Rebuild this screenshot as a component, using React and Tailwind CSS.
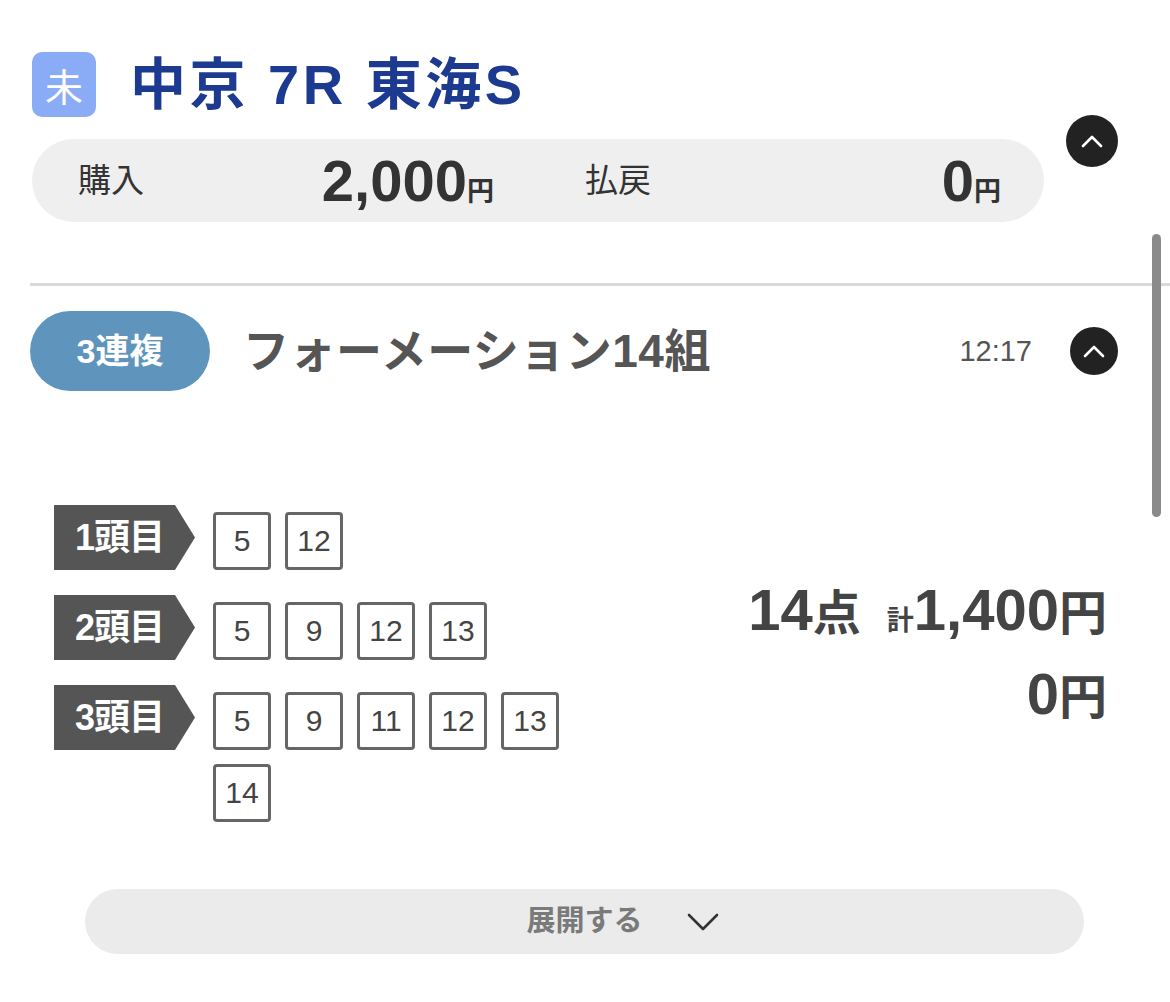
import React from "react";

const FONT = { fontFamily: '"Liberation Sans", "Noto Sans CJK JP", sans-serif' };

function UpButton({ size }) {
  return (
    <div
      className="flex items-center justify-center rounded-full bg-[#222222]"
      style={{ width: size, height: size }}
    >
      <svg width="22" height="14" viewBox="0 0 22 14" fill="none">
        <path d="M2 12 L11 3 L20 12" stroke="white" strokeWidth="2.6" strokeLinecap="round" strokeLinejoin="round" />
      </svg>
    </div>
  );
}

function Tag({ label }) {
  return (
    <div className="relative h-[65px] w-[141px] shrink-0">
      <svg className="absolute inset-0" width="141" height="65" viewBox="0 0 141 65">
        <polygon points="0,0 121,0 141,32.5 121,65 0,65" fill="#555555" />
      </svg>
      <div className="relative flex h-full w-[121px] items-center justify-center pl-[10px] text-[36px] font-bold leading-none text-white tracking-[-1px]">
        {label}
      </div>
    </div>
  );
}

function NumBox({ n }) {
  return (
    <div className="flex h-[58px] w-[58px] items-center justify-center rounded-[4px] border-[3px] border-[#666666] text-[30px] leading-none text-[#444444]">
      {n}
    </div>
  );
}

function Row({ label, nums }) {
  return (
    <div className="flex items-start">
      <Tag label={label} />
      <div className="ml-[18px] mt-[7px] flex w-[360px] flex-wrap gap-x-[14px] gap-y-[14px]">
        {nums.map((n, i) => (
          <NumBox key={i} n={n} />
        ))}
      </div>
    </div>
  );
}

export default function App() {
  return (
    <div className="relative h-[1002px] w-[1170px] overflow-hidden bg-white" style={FONT}>
      {/* scrollbar overlay */}
      <div className="absolute left-[1152px] top-[234px] h-[283px] w-[9px] rounded-full bg-[#8a8a8a]" />

      {/* header */}
      <div className="flex pl-[32px] pt-[52px]">
        <div className="flex w-[1012px] flex-col">
          <div className="flex items-center">
            <div className="flex h-[65px] w-[64px] items-center justify-center rounded-[10px] bg-[#8aabf5] text-[38px] leading-none text-white" style={{ fontFamily: '"Noto Sans CJK JP", sans-serif' }}>
              未
            </div>
            <div className="ml-[34px] text-[56px] font-bold leading-none text-[#1b3a90] tracking-[3.5px]">
              中京 7R 東海S
            </div>
          </div>
          <div className="mt-[22px] flex h-[83px] items-center rounded-full bg-[#efefef] text-[#333333]">
            <div className="ml-[46px] w-[160px] text-[33px] leading-none">購入</div>
            <div className="w-[256px] text-right leading-none">
              <span className="text-[58px] font-bold">2,000</span>
              <span className="text-[27px] font-bold">円</span>
            </div>
            <div className="ml-[91px] w-[130px] text-[33px] leading-none">払戻</div>
            <div className="w-[286px] text-right leading-none">
              <span className="text-[58px] font-bold">0</span>
              <span className="text-[27px] font-bold">円</span>
            </div>
          </div>
        </div>
        <div className="ml-[22px] mt-[63px]">
          <UpButton size={52} />
        </div>
      </div>

      {/* divider */}
      <div className="ml-[30px] mt-[61px] h-[3px] bg-[#d9d9d9]" />

      {/* bet header */}
      <div className="mt-[25px] flex items-center pl-[30px]">
        <div className="flex h-[80px] w-[180px] items-center justify-center rounded-full bg-[#5f95bd] text-[34px] font-bold leading-none text-white">
          3連複
        </div>
        <div className="ml-[33px] text-[46px] font-bold leading-none text-[#555555] tracking-[0.5px]">
          フォーメーション14組
        </div>
        <div className="ml-auto text-[29px] leading-none text-[#555555]">12:17</div>
        <div className="ml-[38px] mr-[52px]">
          <UpButton size={48} />
        </div>
      </div>

      {/* rows */}
      <div className="mt-[114px] flex pl-[54px]">
        <div className="flex flex-col gap-[25px]">
          <Row label="1頭目" nums={["5", "12"]} />
          <Row label="2頭目" nums={["5", "9", "12", "13"]} />
          <Row label="3頭目" nums={["5", "9", "11", "12", "13", "14"]} />
        </div>
        <div className="ml-auto mr-[63px] mt-[76px] flex flex-col items-end text-[#444444]">
          <div className="flex items-baseline font-bold leading-none">
            <span className="text-[58px]">14</span>
            <span className="text-[48px]">点</span>
            <span className="ml-[26px] text-[27px]">計</span>
            <span className="text-[58px]">1,400</span>
            <span className="text-[48px]">円</span>
          </div>
          <div className="mt-[26px] flex items-baseline font-bold leading-none">
            <span className="text-[58px]">0</span>
            <span className="text-[48px]">円</span>
          </div>
        </div>
      </div>

      {/* expand */}
      <div className="ml-[85px] mt-[67px] flex h-[65px] w-[999px] items-center justify-center rounded-full bg-[#ebebeb]">
        <span className="relative text-[29px] font-bold leading-none text-[#7a7a7a]">
          展開する
          <svg className="absolute left-full top-1/2 ml-[44px] -translate-y-1/2" width="32" height="20" viewBox="0 0 32 20" fill="none">
            <path d="M2 3 L16 17 L30 3" stroke="#333333" strokeWidth="2.6" strokeLinecap="round" strokeLinejoin="round" />
          </svg>
        </span>
      </div>
    </div>
  );
}
